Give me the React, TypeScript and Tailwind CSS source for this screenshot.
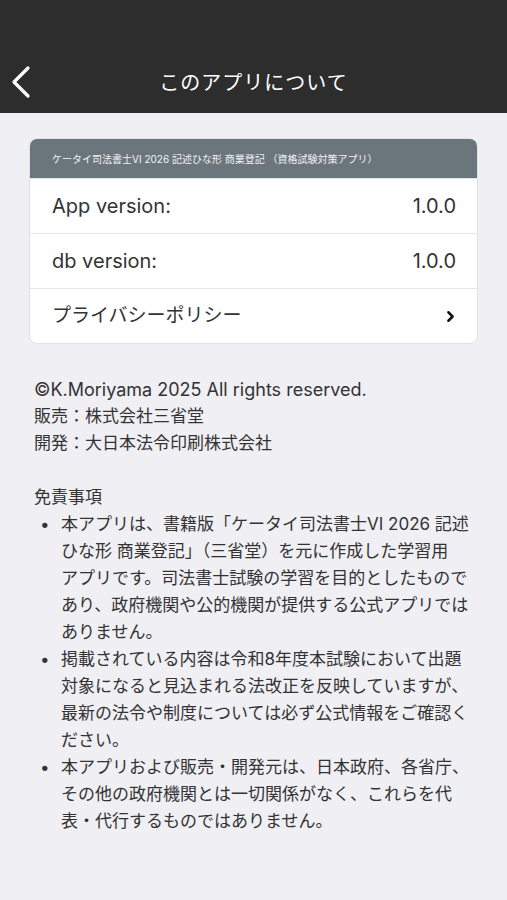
import { ChevronRight } from 'lucide-react'

const font = { fontFamily: 'Inter, "Noto Sans CJK JP", "Noto Sans", sans-serif' }

function Row({ label, value, link }: { label: string; value?: string; link?: boolean }) {
    return (
        <div className="flex h-[55px] items-center justify-between border-t border-[#e6e6ea] pl-[22px] pr-[21px]">
            <span className={link ? 'text-[19px] text-[#333333]' : 'text-[20px] text-[#333333]'}>{label}</span>
            {value && <span className="text-[20px] text-[#333333]">{value}</span>}
            {link && <ChevronRight size={17} strokeWidth={3.5} className="mr-[-3px] text-[#111111]" />}
        </div>
    )
}

function BackIcon() {
    return (
        <svg width="22" height="34" viewBox="0 0 22 34" fill="none">
            <polyline points="18,3 4,17 18,31" stroke="white" strokeWidth="3.2" strokeLinecap="round" strokeLinejoin="round" />
        </svg>
    )
}

export default function App() {
    return (
        <div className="min-h-[900px] w-[507px] bg-[#efeff4] pb-10" style={font}>
            <header className="relative flex h-[113px] items-end justify-center bg-[#2d2d2d] pb-[15px]">
                <button className="absolute left-[10px] bottom-[14px]">
                    <BackIcon />
                </button>
                <h1 className="text-[20px] font-normal tracking-[1px] text-white">このアプリについて</h1>
            </header>

            <div className="mx-[29px] mt-[25px] overflow-hidden rounded-[8px] border border-[#e2e2e6] bg-white">
                <div className="flex h-[40px] items-center bg-[#6b757c] px-[22px] text-[10px] text-[#f2f2f2]">
                    ケータイ司法書士VI 2026 記述ひな形 商業登記 （資格試験対策アプリ）
                </div>
                <div className="-mt-px">
                    <Row label="App version:" value="1.0.0" />
                    <Row label="db version:" value="1.0.0" />
                    <Row label="プライバシーポリシー" link />
                </div>
            </div>

            <div className="mt-[32px] px-[34px] text-[17px] leading-[27px] text-[#333333]">
                <p className="text-[18px]">©K.Moriyama 2025 All rights reserved.</p>
                <p>販売：株式会社三省堂</p>
                <p>開発：大日本法令印刷株式会社</p>

                <p className="mt-[27px]">免責事項</p>
                <ul className="pl-[27px]">
                    <li className="relative">
                        <span className="absolute left-[-21px] top-0">•</span>
                        本アプリは、書籍版「ケータイ司法書士VI 2026 記述
                        <br />
                        ひな形 商業登記」（三省堂）を元に作成した学習用
                        <br />
                        アプリです。司法書士試験の学習を目的としたもので
                        <br />
                        あり、政府機関や公的機関が提供する公式アプリでは
                        <br />
                        ありません。
                    </li>
                    <li className="relative">
                        <span className="absolute left-[-21px] top-0">•</span>
                        掲載されている内容は令和8年度本試験において出題
                        <br />
                        対象になると見込まれる法改正を反映していますが、
                        <br />
                        最新の法令や制度については必ず公式情報をご確認く
                        <br />
                        ださい。
                    </li>
                    <li className="relative">
                        <span className="absolute left-[-21px] top-0">•</span>
                        本アプリおよび販売・開発元は、日本政府、各省庁、
                        <br />
                        その他の政府機関とは一切関係がなく、これらを代
                        <br />
                        表・代行するものではありません。
                    </li>
                </ul>
            </div>
        </div>
    )
}
